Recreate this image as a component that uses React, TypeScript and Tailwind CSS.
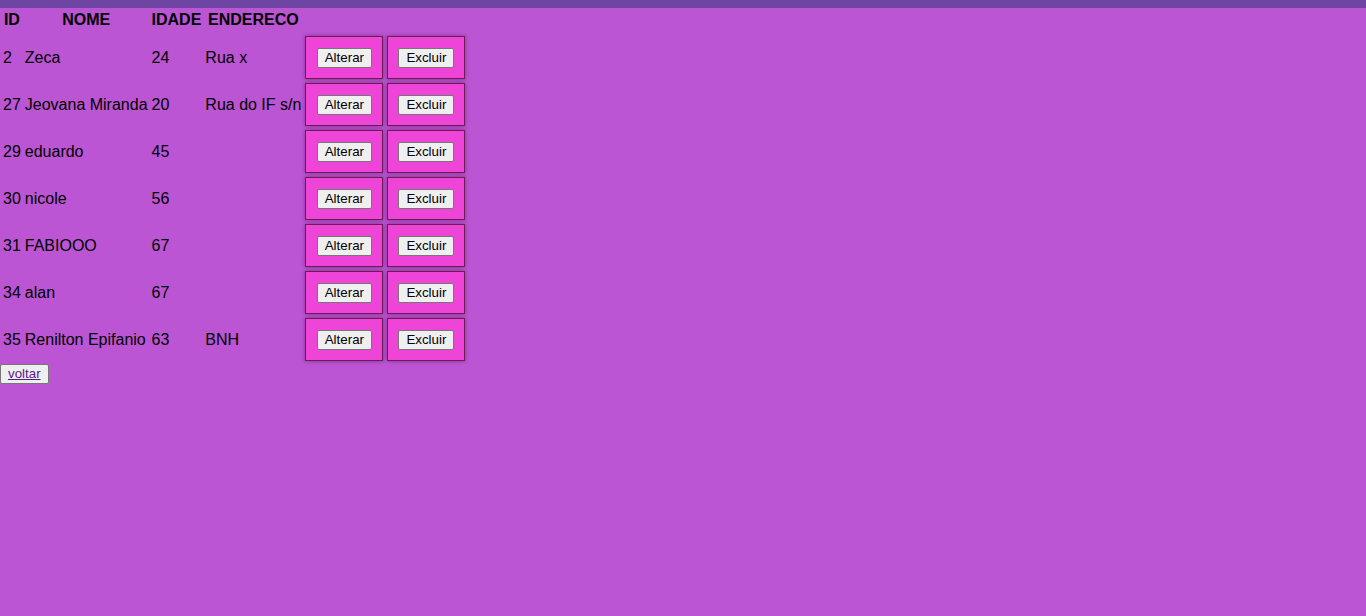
import React from "react";

type Pessoa = {
  id: number;
  nome: string;
  idade: number;
  endereco: string;
};

const pessoas: Pessoa[] = [
  { id: 2, nome: "Zeca", idade: 24, endereco: "Rua x" },
  { id: 27, nome: "Jeovana Miranda", idade: 20, endereco: "Rua do IF s/n" },
  { id: 29, nome: "eduardo", idade: 45, endereco: "" },
  { id: 30, nome: "nicole", idade: 56, endereco: "" },
  { id: 31, nome: "FABIOOO", idade: 67, endereco: "" },
  { id: 34, nome: "alan", idade: 67, endereco: "" },
  { id: 35, nome: "Renilton Epifanio", idade: 63, endereco: "BNH" },
];

const btnClass =
  "h-[20px] bg-[#efefef] border border-[#767676] rounded-[2px] px-[7px] text-[13.33px] leading-[16px] text-black";

function ActionCell({ label }: { label: string }) {
  return (
    <td className="p-[1px] align-middle">
      {/* caixa rosa com o botao */}
      <div className="w-[78px] h-[43px] flex items-center justify-center bg-[#ee44d8] border border-[#6e1a58] shadow-[0_0_4px_rgba(60,0,40,0.45)]">
        <button type="button" className={btnClass}>
          {label}
        </button>
      </div>
    </td>
  );
}

export default function App() {
  return (
    <div
      className="min-h-screen bg-[#bb55d4] text-black text-[16px] leading-[18px]"
      style={{ fontFamily: '"Liberation Sans", Arial, sans-serif' }}
    >
      <div className="h-[8px] bg-[#6e45a2]" />

      <table className="border-separate border-spacing-[2px]">
        <thead>
          <tr>
            <th className="pt-[1px] pb-[4px] px-[1px] font-bold text-center">ID</th>
            <th className="pt-[1px] pb-[4px] px-[1px] font-bold text-center">NOME</th>
            <th className="pt-[1px] pb-[4px] px-[1px] font-bold text-center">IDADE</th>
            <th className="pt-[1px] pb-[4px] px-[1px] font-bold text-center">ENDERECO</th>
          </tr>
        </thead>
        <tbody>
          {pessoas.map((p) => (
            <tr key={p.id}>
              <td className="p-[1px] align-middle">{p.id}</td>
              <td className="p-[1px] align-middle">{p.nome}</td>
              <td className="p-[1px] align-middle">{p.idade}</td>
              <td className="p-[1px] align-middle">{p.endereco}</td>
              <ActionCell label="Alterar" />
              <ActionCell label="Excluir" />
            </tr>
          ))}
        </tbody>
      </table>

      <button type="button" className={btnClass}>
        <a href="#" className="underline text-[#551a8b]">
          voltar
        </a>
      </button>
    </div>
  );
}
